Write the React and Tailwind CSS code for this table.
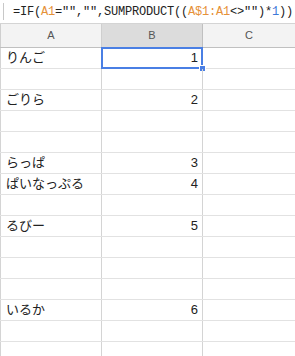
import React from 'react';

const rows = [
  ['りんご', '1'],
  ['', ''],
  ['ごりら', '2'],
  ['', ''],
  ['', ''],
  ['らっぱ', '3'],
  ['ぱいなっぷる', '4'],
  ['', ''],
  ['るびー', '5'],
  ['', ''],
  ['', ''],
  ['', ''],
  ['いるか', '6'],
  ['', ''],
  ['', ''],
];

const App = () => {
  return (
    <div className="w-[295px] h-[356px] overflow-hidden bg-white font-['Liberation_Sans','Noto_Sans_CJK_JP',sans-serif]">
      {/* 数式バー */}
      <div className="h-[24px] flex items-center border-b border-[#d4d4d4]">
        <div className="ml-[3px] w-px h-[17px] bg-[#c8c8c8]"></div>
        <p className="ml-[9px] whitespace-nowrap text-[12px] tracking-[-0.2px] text-[#222] font-['Liberation_Mono',monospace]">
          =IF(<span className="text-[#e69138]">A1</span>="",&quot;&quot;,SUMPRODUCT((<span className="text-[#e69138]">A$1:A1</span>&lt;&gt;"")*<span className="text-[#3c78d8]">1</span>))
        </p>
      </div>

      {/* 列見出し */}
      <div className="grid grid-cols-[102px_101px_1fr] h-[24px] border-b border-[#c0c0c0] text-[11px] text-[#555]">
        <div className="bg-[#f3f3f3] border-l border-r border-[#cfcfcf] flex items-center justify-center">A</div>
        <div className="bg-[#dcdcdc] border-r border-[#c0c0c0] flex items-center justify-center">B</div>
        <div className="bg-[#f3f3f3] flex items-center justify-center">C</div>
      </div>

      {/* セル */}
      {rows.map(([name, num], i) => (
        <div key={i} className="grid grid-cols-[102px_101px_1fr] h-[21px] border-b border-[#e2e2e2] text-[13px] text-[#222]">
          <div className="border-l border-r border-[#d4d4d4] flex items-center pl-[5px] whitespace-nowrap">{name}</div>
          <div className="relative border-r border-[#d4d4d4] flex items-center justify-end pr-[4px]">
            {num}
            {i === 0 && (
              <div className="absolute -left-px -top-px -right-px -bottom-px border-2 border-[#4a7fe4]">
                <span className="absolute -right-[5px] -bottom-[5px] w-[7px] h-[7px] bg-[#4a7fe4] border border-white"></span>
              </div>
            )}
          </div>
          <div></div>
        </div>
      ))}
    </div>
  );
};

export default App;
